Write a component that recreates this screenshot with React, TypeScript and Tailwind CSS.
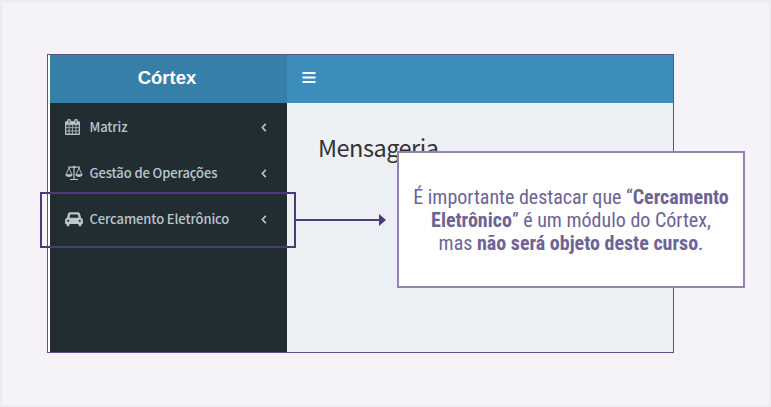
import React from "react";

const sans = "font-['Noto_Sans_CJK_JP','Noto_Sans',sans-serif]";

function CalendarIcon() {
  return (
    <svg viewBox="64 0 1664 1792" className="h-[16px] w-[15px]" fill="currentColor" stroke="currentColor" strokeWidth="30">
      <path d="M192 1664h288v-288h-288v288zm352 0h320v-288h-320v288zm-352-352h288v-320h-288v320zm352 0h320v-320h-320v320zm-352-384h288v-288h-288v288zm736 736h320v-288h-320v288zm-384-736h320v-288h-320v288zm768 736h288v-288h-288v288zm-384-352h320v-320h-320v320zm-352-864v-288q0-13-9.5-22.5t-22.5-9.5h-64q-13 0-22.5 9.5t-9.5 22.5v288q0 13 9.5 22.5t22.5 9.5h64q13 0 22.5-9.5t9.5-22.5zm736 864h288v-320h-288v320zm-384-384h320v-288h-320v288zm384 0h288v-288h-288v288zm32-480v-288q0-13-9.5-22.5t-22.5-9.5h-64q-13 0-22.5 9.5t-9.5 22.5v288q0 13 9.5 22.5t22.5 9.5h64q13 0 22.5-9.5t9.5-22.5zm384-64v1280q0 52-38 90t-90 38h-1408q-52 0-90-38t-38-90v-1280q0-52 38-90t90-38h128v-96q0-66 47-113t113-47h64q66 0 113 47t47 113v96h384v-96q0-66 47-113t113-47h64q66 0 113 47t47 113v96h128q52 0 90 38t38 90z" />
    </svg>
  );
}

function ScaleIcon() {
  return (
    <svg viewBox="0 0 18 16" className="h-[16px] w-[18px]" fill="none" stroke="currentColor">
      <path d="M3 2.2h12M9 1v13M5 14.500h8" strokeWidth="1.2" />
      <circle cx="9" cy="2" r="1.200" fill="currentColor" stroke="none" />
      <path d="M4 3L1 9.800M4 3l3 6.800M14 3l-3 6.800M14 3l3 6.800" strokeWidth="0.9" />
      <path d="M.3 9.300h7.400c-.3 3.600-7.100 3.600-7.400 0zM10.300 9.300h7.400c-.3 3.600-7.100 3.600-7.400 0z" fill="currentColor" stroke="none" />
    </svg>
  );
}

function CarIcon() {
  return (
    <svg viewBox="0 0 18 16" className="h-[16px] w-[18px]" fill="currentColor">
      <path
        fillRule="evenodd"
        d="M5 1.300h8c1 0 1.700.6 2 1.500l1.100 4.100c1 .1 1.800 1 1.800 2v3.600c0 .3-.2.5-.5.5h-.9v.8c0 2-3 2-3 0V13h-9v.8c0 2-3 2-3 0V13H.6c-.3 0-.5-.2-.5-.5V8.900c0-1 .8-1.900 1.800-2L3 2.800C3.300 1.900 4 1.300 5 1.300zM5.200 3.400L4.400 6.800h9.200l-.8-3.400zM3.200 8.700a1.100 1.100 0 100 2.200 1.100 1.100 0 000-2.200zM14.800 8.700a1.100 1.100 0 100 2.200 1.100 1.100 0 000-2.200z"
      />
    </svg>
  );
}

function MenuItem({ icon, label }: { icon: React.ReactNode; label: string }) {
  return (
    <div className="flex h-[46px] items-center pl-[15px] pr-[20px]">
      <span className="flex w-[24.500px] shrink-0">{icon}</span>
      <span className="whitespace-nowrap text-[13px] font-medium tracking-[-0.11px]">{label}</span>
      <svg viewBox="0 0 6 10" className="ml-auto h-[9px] w-[6px]" fill="none" stroke="currentColor" strokeWidth="1.8">
        <path d="M5 1L1.200 5 5 9" />
      </svg>
    </div>
  );
}

export default function App() {
  return (
    <div className="relative h-[407px] w-[771px] overflow-hidden border-2 border-[#edebf2] bg-[#f5f3f8] pl-[45px] pt-[52px]">
      <div className="flex h-[299px] w-[627px] border border-[#62508a] bg-white pl-[2px]">
        <aside className={`flex w-[237px] flex-col bg-[#222d32] text-[#b8c7ce] ${sans}`}>
          <div className="flex h-[48px] shrink-0 items-center justify-center bg-[#367fa9] pb-[3px] pr-[3px] font-['Liberation_Sans',Arial,sans-serif] text-[18.500px] font-bold text-white">
            <span>Córtex</span>
          </div>
          <nav className="pt-px">
            <MenuItem icon={<CalendarIcon />} label="Matriz" />
            <MenuItem icon={<ScaleIcon />} label="Gestão de Operações" />
            <MenuItem icon={<CarIcon />} label="Cercamento Eletrônico" />
          </nav>
        </aside>
        <main className="flex flex-1 flex-col bg-[#ecf0f5]">
          <div className="flex h-[48px] shrink-0 items-start bg-[#3c8dbc] pl-[15px] pt-[17px]">
            <svg viewBox="0 0 14 11" className="h-[11px] w-[14px]" fill="white">
              <path d="M.5 0h13v2H.5zM.5 4.500h13v2H.5zM.5 9h13v2H.5z" />
            </svg>
          </div>
          <h1 className={`pl-[31px] pt-[26px] text-[23.500px] leading-[36px] tracking-[-0.5px] text-[#333] ${sans}`}>Mensageria</h1>
        </main>
      </div>

      <div className="absolute left-[38px] top-[190px] h-[56px] w-[256px] border-2 border-[#4c3a76]" />
      <svg viewBox="0 0 92 14" className="absolute left-[293px] top-[211px] h-[14px] w-[92px]" fill="#4c3a76">
        <path d="M0 6h84V1l7 6-7 6V8H0z" />
      </svg>

      <div className="absolute left-[395px] top-[149px] flex h-[137px] w-[348px] items-center justify-center border-2 border-[#9482b0] bg-white pt-[2px]">
        <p className="whitespace-nowrap text-center font-['Roboto_Condensed',Roboto,sans-serif] text-[20px] leading-[23px] text-[#6d6394] [font-stretch:75%]">
          É importante destacar que “<b>Cercamento</b>
          <br />
          <b>Eletrônico</b>” é um módulo do Córtex,
          <br />
          mas <b>não será objeto deste curso</b>.
        </p>
      </div>
    </div>
  );
}
